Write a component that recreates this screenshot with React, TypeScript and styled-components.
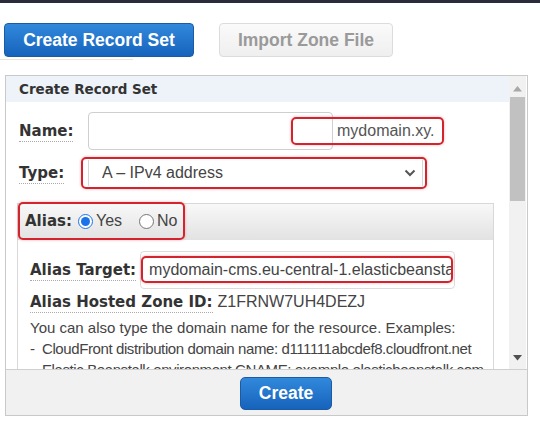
import styled, { createGlobalStyle } from 'styled-components';

const GlobalStyle = createGlobalStyle`
  body {
    margin: 0;
    background: #ffffff;
    font-family: "Liberation Sans", Arial, sans-serif;
  }
`;

const Page = styled.div`
  width: 540px;
  height: 425px;
  overflow: hidden;
  background: #fff;
`;

const TopStrip = styled.div`
  height: 3px;
  background: #2c2b3a;
`;

const Toolbar = styled.div`
  display: flex;
  gap: 25px;
  padding: 20px 0 0 4px;
`;

const ToolButton = styled.button<{ $primary?: boolean; $width: number }>`
  width: ${p => p.$width}px;
  height: 34px;
  padding: 0;
  border-radius: 4px;
  font-family: "Liberation Sans", Arial, sans-serif;
  font-weight: 700;
  font-size: 17.5px;
  border: 1px solid ${p => (p.$primary ? '#1b5aa5' : '#dcdcdc')};
  color: ${p => (p.$primary ? '#ffffff' : '#9a9a9a')};
  background: ${p =>
    p.$primary
      ? 'linear-gradient(to bottom, #3189dc, #1663bb)'
      : 'linear-gradient(to bottom, #fafafa, #efefef)'};
`;

const ToolRule = styled.div`
  width: 133px;
  height: 1px;
  margin-top: 2px;
  background: #f1e3d0;
`;

const Panel = styled.div`
  margin: 15px 0 0 5px;
  width: 523px;
  height: 341px;
  box-sizing: border-box;
  border: 1px solid #c9c9c9;
  display: flex;
  flex-direction: column;
`;

const PanelBody = styled.div`
  display: flex;
  height: 293px;
`;

const Content = styled.div`
  flex: 1;
  overflow: hidden;
`;

const PanelHeader = styled.div`
  height: 26px;
  background: #eef3fa;
  display: flex;
  align-items: center;
  padding-left: 13px;
  font-family: "DejaVu Sans", Verdana, sans-serif;
  font-weight: 700;
  font-size: 13.5px;
  color: #333;
`;

const Form = styled.div`
  padding: 0 0 0 11px;
  display: flex;
  flex-direction: column;
`;

const Row = styled.div<{ $top: number; $indent?: number }>`
  display: flex;
  align-items: center;
  margin-top: ${p => p.$top}px;
  padding-left: ${p => p.$indent ?? 2}px;
`;

const Label = styled.span<{ $width?: number }>`
  font-family: "DejaVu Sans", Verdana, sans-serif;
  font-weight: 700;
  font-size: 15px;
  color: #333;
  white-space: nowrap;
  ${p => (p.$width ? `width: ${p.$width}px;` : '')}
`;

const Dotted = styled.span`
  border-bottom: 1px dotted #aaa;
  padding-bottom: 1px;
`;

const NameField = styled.div`
  position: relative;
  display: flex;
  align-items: center;
`;

const TextInput = styled.div`
  width: 245px;
  height: 38px;
  box-sizing: border-box;
  border: 1px solid #cfcfcf;
  border-radius: 4px;
  background: #fff;
`;

const Suffix = styled.span`
  margin-left: 4px;
  font-size: 16px;
  color: #555;
`;

// red annotation drawn over the end of the name input and its suffix
const Highlight = styled.div`
  position: absolute;
  left: 203px;
  top: 5px;
  width: 153px;
  height: 28px;
  box-sizing: border-box;
  border: 2px solid #d3232c;
  border-radius: 5px;
  box-shadow: 0 0 3px rgba(211, 35, 44, 0.35);
`;

const RedFrame = styled.div`
  border: 2px solid #d3232c;
  border-radius: 5px;
  box-shadow: 0 0 3px rgba(211, 35, 44, 0.35);
  box-sizing: border-box;
`;

const TypeFrame = styled(RedFrame)`
  width: 346px;
  height: 32px;
  padding: 1px 2px 1px 5px;
`;

const Select = styled.div`
  height: 100%;
  box-sizing: border-box;
  border-left: 1px solid #d6d6d6;
  border-right: 1px solid #d6d6d6;
  display: flex;
  align-items: center;
  justify-content: space-between;
  padding: 0 6px 0 13px;
  font-size: 16px;
  color: #444;
  background: #fff;
`;

const AliasBox = styled.div`
  margin-top: 14px;
  width: 477px;
  height: 200px;
  box-sizing: border-box;
  border: 1px solid #d8d8d8;
  border-bottom: none;
`;

const AliasBand = styled.div`
  height: 36px;
  background: linear-gradient(to bottom, #f8f8f8, #e2e2e2);
  display: flex;
`;

const AliasFrame = styled(RedFrame)`
  margin: -2px 0 0 0;
  height: 38px;
  padding: 0 5px 0 5px;
  display: flex;
  align-items: center;
`;

const Radio = styled.span<{ $checked?: boolean }>`
  display: inline-flex;
  align-items: center;
  justify-content: center;
  width: 15px;
  height: 15px;
  box-sizing: border-box;
  border-radius: 50%;
  border: 1px solid ${p => (p.$checked ? '#1a73e8' : '#767676')};
  background: #fff;
  margin: 0 3px 0 ${p => (p.$checked ? 6 : 17)}px;
  &::after {
    content: '';
    width: 9px;
    height: 9px;
    border-radius: 50%;
    background: ${p => (p.$checked ? '#1a73e8' : 'transparent')};
  }
`;

const RadioText = styled.span`
  font-size: 16px;
  color: #444;
`;

const AliasBody = styled.div`
  padding-left: 12px;
  display: flex;
  flex-direction: column;
`;

const TargetInput = styled.div`
  margin-left: 4px;
  width: 315px;
  height: 38px;
  box-sizing: border-box;
  border: 1px solid #dcdcdc;
  border-radius: 4px;
  padding: 4px 1px 5px 0;
`;

const TargetFrame = styled(RedFrame)`
  height: 100%;
  display: flex;
  align-items: center;
  padding-left: 6px;
  overflow: hidden;
  white-space: nowrap;
  font-size: 16px;
  color: #444;
`;

const ZoneRow = styled.div`
  margin-top: 3px;
  display: flex;
  align-items: baseline;
  line-height: 20px;
`;

const ZoneValue = styled.span`
  margin-left: 5px;
  font-size: 16px;
  color: #444;
`;

const Help = styled.div`
  margin-top: 5px;
  font-size: 15px;
  line-height: 21px;
  color: #444;
  white-space: nowrap;
`;

const HelpItem = styled.div`
  display: flex;
  letter-spacing: -0.4px;
`;

const Bullet = styled.span`
  flex: none;
  width: 12px;
  letter-spacing: 0;
`;

const ScrollTrack = styled.div`
  width: 17px;
  margin-right: 1px;
  background: #f1f1f1;
  display: flex;
  flex-direction: column;
  align-items: center;
`;

const ScrollArrow = styled.div<{ $down?: boolean }>`
  height: 17px;
  display: flex;
  align-items: center;
  justify-content: center;
  margin-top: ${p => (p.$down ? 'auto' : '4px')};
  margin-bottom: ${p => (p.$down ? '3px' : '0')};
`;

const ScrollThumb = styled.div`
  width: 15px;
  height: 104px;
  background: #c1c1c1;
`;

const Footer = styled.div`
  flex: 1;
  border-top: 1px solid #cfcfcf;
  background: #f1f1f1;
  display: flex;
  align-items: flex-start;
  padding: 7px 0 0 234px;
`;

const CreateButton = styled.button`
  width: 92px;
  height: 33px;
  padding: 0;
  border-radius: 5px;
  border: 1px solid #1b5aa5;
  background: linear-gradient(to bottom, #3189dc, #1663bb);
  color: #fff;
  font-family: "Liberation Sans", Arial, sans-serif;
  font-weight: 700;
  font-size: 17.5px;
`;

function Chevron() {
  return (
    <svg width="12" height="8" viewBox="0 0 12 8">
      <path d="M1.5 1.5 L6 6 L10.5 1.5" fill="none" stroke="#555" strokeWidth="2" />
    </svg>
  );
}

function Triangle({ down, color }: { down?: boolean; color: string }) {
  return (
    <svg width="9" height="6" viewBox="0 0 9 6">
      <path d={down ? 'M0 0 H9 L4.5 5.5 Z' : 'M0 5.5 H9 L4.5 0 Z'} fill={color} />
    </svg>
  );
}

export default function App() {
  return (
    <Page>
      <GlobalStyle />
      <TopStrip />
      <Toolbar>
        <ToolButton $primary $width={190}>Create Record Set</ToolButton>
        <ToolButton $width={174}>Import Zone File</ToolButton>
      </Toolbar>
      <ToolRule />
      <Panel>
        <PanelBody>
          <Content>
            <PanelHeader>Create Record Set</PanelHeader>
            <Form>
              <Row $top={10}>
                <Label $width={69}><Dotted>Name:</Dotted></Label>
                <NameField>
                  <TextInput />
                  <Suffix>mydomain.xy.</Suffix>
                  <Highlight />
                </NameField>
              </Row>
              <Row $top={7}>
                <Label $width={62}><Dotted>Type:</Dotted></Label>
                <TypeFrame>
                  <Select>
                    <span>A – IPv4 address</span>
                    <Chevron />
                  </Select>
                </TypeFrame>
              </Row>
              <AliasBox>
                <AliasBand>
                  <AliasFrame>
                    <Label>Alias:</Label>
                    <Radio $checked />
                    <RadioText>Yes</RadioText>
                    <Radio />
                    <RadioText>No</RadioText>
                  </AliasFrame>
                </AliasBand>
                <AliasBody>
                  <Row $top={11} $indent={0}>
                    <Label><Dotted>Alias Target:</Dotted></Label>
                    <TargetInput>
                      <TargetFrame>mydomain-cms.eu-central-1.elasticbeanstalk.com</TargetFrame>
                    </TargetInput>
                  </Row>
                  <ZoneRow>
                    <Label><Dotted>Alias Hosted Zone ID:</Dotted></Label>
                    <ZoneValue>Z1FRNW7UH4DEZJ</ZoneValue>
                  </ZoneRow>
                  <Help>
                    <div>You can also type the domain name for the resource. Examples:</div>
                    <HelpItem><Bullet>-</Bullet><span>CloudFront distribution domain name: d111111abcdef8.cloudfront.net</span></HelpItem>
                    <HelpItem><Bullet>-</Bullet><span>Elastic Beanstalk environment CNAME: example.elasticbeanstalk.com</span></HelpItem>
                  </Help>
                </AliasBody>
              </AliasBox>
            </Form>
          </Content>
          <ScrollTrack>
            <ScrollArrow><Triangle color="#a8a8a8" /></ScrollArrow>
            <ScrollThumb />
            <ScrollArrow $down><Triangle down color="#505050" /></ScrollArrow>
          </ScrollTrack>
        </PanelBody>
        <Footer>
          <CreateButton>Create</CreateButton>
        </Footer>
      </Panel>
    </Page>
  );
}
